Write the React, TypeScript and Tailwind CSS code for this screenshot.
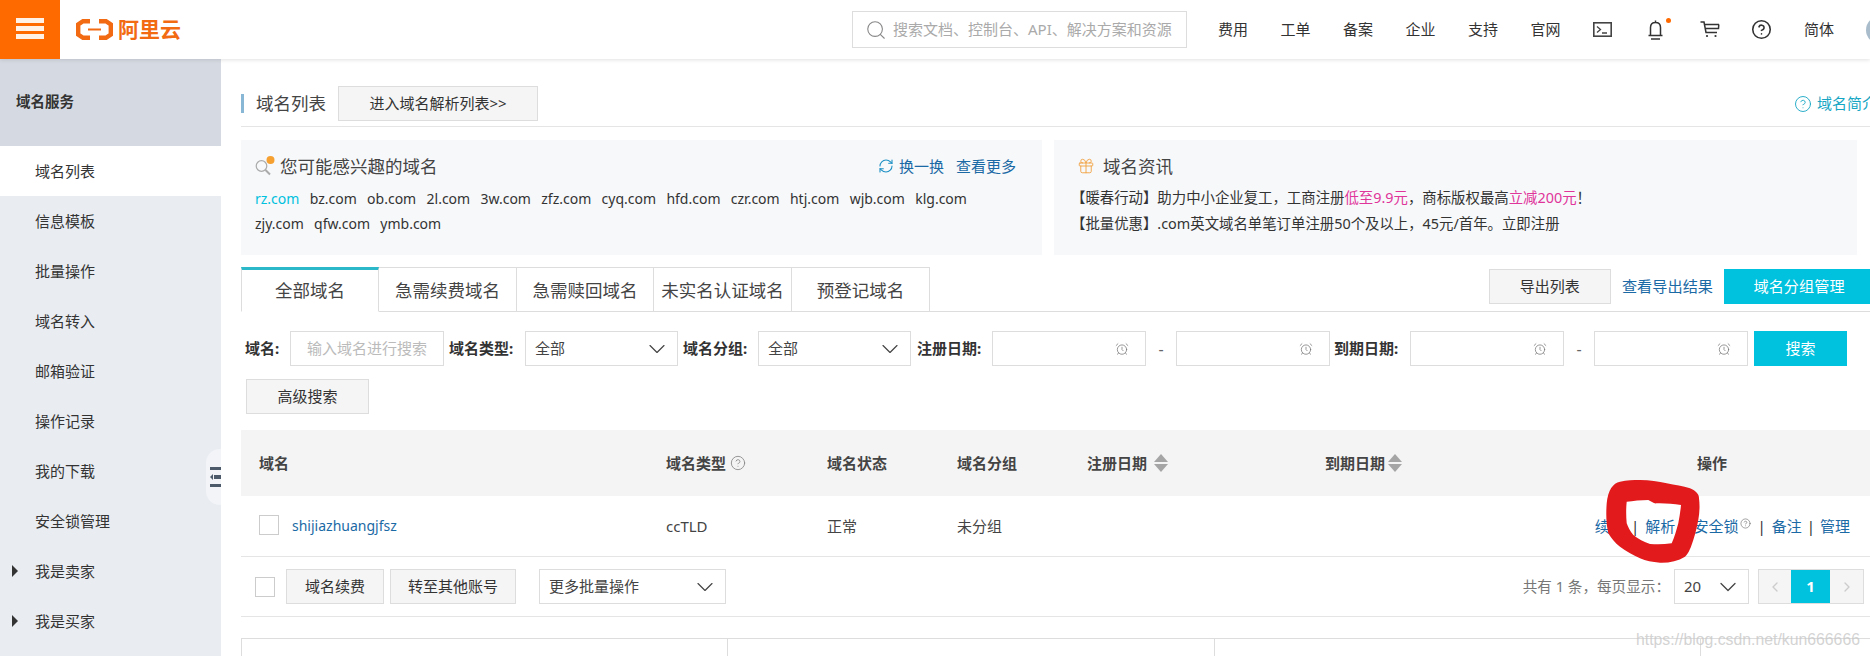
import { ChevronDown, ChevronLeft, ChevronRight, CircleHelp, Search, AlarmClock, Gift, RefreshCw } from "lucide-react";

const font = "font-['Noto_Sans','Noto_Sans_CJK_SC',sans-serif]";

const sideItems = ["信息模板", "批量操作", "域名转入", "邮箱验证", "操作记录", "我的下载", "安全锁管理"];
const domains1 = ["bz.com", "ob.com", "2l.com", "3w.com", "zfz.com", "cyq.com", "hfd.com", "czr.com", "htj.com", "wjb.com", "klg.com"];
const domains2 = ["zjy.com", "qfw.com", "ymb.com"];
const navLeft = ["费用", "工单", "备案", "企业", "支持", "官网"];

const Logo = () => (
  <svg width="37" height="21" viewBox="0 0 37 21" fill="none" stroke="#f26a12" strokeWidth="4.4">
    <path d="M14 2.2H7L2.2 5.5V15.5L7 18.8H14" />
    <path d="M23 2.2H30L34.8 5.5V15.5L30 18.8H23" />
    <path d="M12 10.5H25" strokeWidth="2" />
  </svg>
);

const TerminalIcon = () => (
  <svg width="19" height="15" viewBox="0 0 19 15" fill="none" stroke="#444" strokeWidth="1.6">
    <rect x="0.8" y="0.8" width="17.4" height="13.4" />
    <path d="M4 4.5L7.5 7.5L4 10.5M9 11H14" strokeWidth="1.3" />
  </svg>
);

const BellIcon = () => (
  <svg width="15" height="20" viewBox="0 0 15 20" fill="none" stroke="#333" strokeWidth="1.5">
    <path d="M7.5 0.5V2.5M2.5 15V7.5C2.5 4.5 4.5 2.5 7.5 2.5C10.5 2.5 12.5 4.5 12.5 7.5V15M0.5 15.5H14.5M3 19H12" />
  </svg>
);

const CartIcon = () => (
  <svg width="20" height="17" viewBox="0 0 20 17" fill="none" stroke="#333" strokeWidth="1.5">
    <path d="M0.5 1H4L6 11.5H17M4.8 3.5H19M5.5 7.5H18.5L18.8 3.5" />
    <circle cx="7" cy="15" r="1.1" fill="#333" stroke="none" />
    <circle cx="15.5" cy="15" r="1.1" fill="#333" stroke="none" />
  </svg>
);

const InterestIcon = () => (
  <svg width="21" height="20" viewBox="0 0 21 20" fill="none" className="shrink-0">
    <circle cx="6.5" cy="10" r="5.3" stroke="#aaaaaa" strokeWidth="1.2" />
    <path d="M10.5 14L15 18.5" stroke="#aaaaaa" strokeWidth="2" />
    <circle cx="15.5" cy="4" r="4" fill="#f5a030" />
  </svg>
);

const Field = ({ children, w }: { children?: React.ReactNode; w: string }) => (
  <div className={`h-[35px] ${w} border border-[#dddddd] bg-white flex items-center justify-between text-[15px] text-[#444]`}>
    {children}
  </div>
);

const SelectField = ({ label, w }: { label: string; w: string }) => (
  <Field w={w}>
    <span className="pl-[9px]">{label}</span>
    <ChevronDown className="w-7 h-7 mr-[6px] text-[#444]" strokeWidth={1} />
  </Field>
);

const DateField = () => (
  <Field w="w-[154px]">
    <span />
    <AlarmClock className="w-[14px] h-[14px] mr-[16px] text-[#777]" strokeWidth={1.3} />
  </Field>
);

const GrayButton = ({ children, className }: { children: React.ReactNode; className: string }) => (
  <button className={`h-[35px] bg-[#f5f5f5] border border-[#dddddd] text-[15px] text-[#333] ${className}`}>{children}</button>
);

const Label = ({ children, className }: { children: React.ReactNode; className: string }) => (
  <span className={`text-[15px] font-bold text-[#333] whitespace-nowrap ${className}`}>{children}</span>
);

const Sep = ({ className = "mx-[6px]" }: { className?: string }) => <span className={`${className} text-[#333]`}>|</span>;

function Sort() {
  return (
    <span className="flex flex-col gap-[2px]">
      <span className="w-0 h-0 border-x-[7px] border-x-transparent border-b-[8px] border-b-[#a5a5a5]" />
      <span className="w-0 h-0 border-x-[7px] border-x-transparent border-t-[8px] border-t-[#a5a5a5]" />
    </span>
  );
}

export default function App() {
  return (
    <div className={`${font} relative w-[1870px] h-[656px] overflow-hidden bg-white text-[#333]`}>
      <header className="h-[59px] flex items-center shadow-[0_1px_4px_rgba(0,0,0,0.12)] relative z-10 bg-white overflow-hidden">
        <div className="w-[60px] h-full shrink-0 bg-[#ff6a00] flex flex-col items-center justify-center gap-[3px] pb-[2px]">
          <span className="w-7 h-[5px] bg-[#fff1e6]" />
          <span className="w-7 h-[5px] bg-[#fff1e6]" />
          <span className="w-7 h-[5px] bg-[#fff1e6]" />
        </div>
        <div className="ml-[16px] w-[105px] shrink-0 flex items-center gap-[5px]">
          <Logo />
          <span className="text-[21px] leading-none font-bold text-[#f26a12] whitespace-nowrap">阿里云</span>
        </div>
        <div className="ml-[671px] w-[335px] shrink-0 h-[37px] border border-[#dddddd] flex items-center pl-[12px] gap-[6px]">
          <Search className="w-[22px] h-[22px] text-[#888]" strokeWidth={1.2} />
          <span className="text-[15px] text-[#aaa] whitespace-nowrap">搜索文档、控制台、API、解决方案和资源</span>
        </div>
        <nav className="ml-[31px] flex items-center text-[15px] text-[#333]">
          {navLeft.map((n) => (
            <span key={n} className="w-[62.5px] whitespace-nowrap">{n}</span>
          ))}
          <span className="w-[55px]"><TerminalIcon /></span>
          <span className="w-[52px] relative">
            <BellIcon />
            <span className="absolute left-[18px] -top-[2px] w-[5px] h-[5px] rounded-full bg-[#ff6a00]" />
          </span>
          <span className="w-[52px]"><CartIcon /></span>
          <span className="w-[52px]"><CircleHelp className="w-[21px] h-[21px] -ml-[1px] text-[#333]" strokeWidth={1.8} /></span>
          <span className="w-[62px] whitespace-nowrap">简体</span>
          <span className="w-[28px] h-[28px] shrink-0 rounded-full bg-[#a9bccb]" />
        </nav>
      </header>

      <div className="flex h-[597px]">
        <aside className="relative w-[221px] shrink-0 bg-[#e9edf2] text-[15px]">
          <div className="h-[87px] bg-[#d5dae2] pl-4 flex items-center font-bold text-[14.5px] pb-[2px]">域名服务</div>
          <div className="h-[50px] bg-white pl-[35px] flex items-center">域名列表</div>
          {sideItems.map((s) => (
            <div key={s} className="h-[50px] pl-[35px] flex items-center">{s}</div>
          ))}
          {["我是卖家", "我是买家"].map((s) => (
            <div key={s} className="h-[50px] pl-[35px] flex items-center relative">
              <span className="absolute left-3 w-0 h-0 border-y-[6px] border-y-transparent border-l-[6px] border-l-[#333]" />
              {s}
            </div>
          ))}
          <div className="absolute right-0 top-[390px] w-[15px] h-[56px] bg-[#f2f4f7] rounded-l-[14px] flex flex-col items-end justify-center gap-[4px]">
            <span className="w-[11px] h-[3px] bg-[#4d5a6a]" />
            <span className="flex items-center gap-[1px]">
              <span className="w-0 h-0 border-y-[3px] border-y-transparent border-r-[3px] border-r-[#4d5a6a]" />
              <span className="w-[7px] h-[4px] bg-[#4d5a6a]" />
            </span>
            <span className="w-[11px] h-[3px] bg-[#4d5a6a]" />
          </div>
        </aside>

        <main className="flex-1 pl-[20px] min-w-0">
          <div className="h-[68px] flex items-center border-b border-[#e5e5e5] pt-[27px] pb-[5px] relative">
            <span className="w-[3px] h-[19px] bg-[#88b7d5]" />
            <span className="ml-[12px] text-[17.5px] text-[#444] whitespace-nowrap">域名列表</span>
            <GrayButton className="ml-[12px] w-[200px] text-[14.5px]">进入域名解析列表&gt;&gt;</GrayButton>
            <span className="ml-auto flex items-center gap-[5px] text-[15px] text-[#16a6c4] whitespace-nowrap translate-x-[7px]">
              <CircleHelp className="w-[18px] h-[18px]" strokeWidth={1.2} />
              域名简介
            </span>
          </div>

          <div className="mt-[13px] flex gap-[12px] pr-[13px]">
            <section className="w-[801px] h-[115px] bg-[#f7f8fa] pl-[14px] pt-[11px]">
              <div className="flex items-center gap-[4px] h-[30px] text-[17.5px] text-[#444]">
                <InterestIcon />
                您可能感兴趣的域名
                <span className="ml-auto mr-[26px] flex items-center text-[15px] text-[#1b6aa5]">
                  <RefreshCw className="w-4 h-4 mr-[5px] text-[#1b8fc4]" strokeWidth={1.6} />
                  <span className="mr-[12px]">换一换</span>
                  <span>查看更多</span>
                </span>
              </div>
              <div className="mt-[5px] flex gap-[10.3px] text-[14px] leading-[25px]">
                <span className="text-[#00c1de]">rz.com</span>
                {domains1.map((d) => <span key={d}>{d}</span>)}
              </div>
              <div className="flex gap-[10.3px] text-[14px] leading-[25px]">
                {domains2.map((d) => <span key={d}>{d}</span>)}
              </div>
            </section>
            <section className="flex-1 h-[115px] bg-[#f7f8fa] pl-[23px] pt-[11px]">
              <div className="flex items-center gap-[8px] h-[30px] text-[17.5px] text-[#444]">
                <Gift className="w-[18px] h-[18px] text-[#f0a040]" strokeWidth={1.2} />
                域名资讯
              </div>
              <div className="text-[14.4px] leading-[26px] mt-[4px] -ml-[6px] whitespace-nowrap">
                【暖春行动】助力中小企业复工，工商注册<span className="text-[#e0359a]">低至9.9元</span>，商标版权最高<span className="text-[#e0359a]">立减200元</span>！
              </div>
              <div className="text-[14.4px] leading-[26px] -ml-[6px] whitespace-nowrap">
                【批量优惠】.com英文域名单笔订单注册50个及以上，45元/首年。立即注册
              </div>
            </section>
          </div>

          <div className="mt-[12px] h-[45px] flex border-b border-[#dddddd] items-end">
            {[
              ["全部域名", "w-[138px]"],
              ["急需续费域名", "w-[138px]"],
              ["急需赎回域名", "w-[137px]"],
              ["未实名认证域名", "w-[138px]"],
              ["预登记域名", "w-[138px]"],
            ].map(([t, w], i) => (
              <div
                key={t}
                className={`${w} h-[45px] -mb-px flex items-center justify-center border-r border-[#dddddd] text-[17.5px] text-[#444] whitespace-nowrap ${
                  i === 0 ? "border-l border-t-[3px] border-t-[#2bb8c9] bg-white border-b border-b-white" : "border-t"
                }`}
              >
                {t}
              </div>
            ))}
            <div className="ml-auto flex items-center self-start mt-[2px]">
              <GrayButton className="w-[122px]">导出列表</GrayButton>
              <span className="ml-[11px] text-[15.2px] text-[#1b6aa5] whitespace-nowrap">查看导出结果</span>
              <button className="ml-[11px] w-[146px] h-[35px] pl-[4px] bg-[#00c1de] text-white text-[15.2px]">域名分组管理</button>
            </div>
          </div>

          <div className="mt-[19px] flex items-center pl-[4px] h-[35px]">
            <Label className="w-[45px]">域名:</Label>
            <div className="w-[154px] h-[35px] border border-[#dddddd] flex items-center justify-center text-[15px] text-[#bbb] whitespace-nowrap">输入域名进行搜索</div>
            <Label className="ml-[5px] w-[76px]">域名类型:</Label>
            <SelectField label="全部" w="w-[153px]" />
            <Label className="ml-[5px] w-[75px]">域名分组:</Label>
            <SelectField label="全部" w="w-[153px]" />
            <Label className="ml-[6px] w-[75px]">注册日期:</Label>
            <DateField />
            <span className="w-[30px] text-center text-[#666]">-</span>
            <DateField />
            <Label className="ml-[4px] w-[76px]">到期日期:</Label>
            <DateField />
            <span className="w-[30px] text-center text-[#666]">-</span>
            <DateField />
            <button className="ml-[6px] w-[93px] h-[35px] bg-[#00c1de] text-white text-[15px]">搜索</button>
          </div>
          <GrayButton className="mt-[13px] ml-[5px] w-[123px] block">高级搜索</GrayButton>

          <div className="mt-[16px] h-[66px] bg-[#f4f4f4] flex items-center text-[15px] font-bold text-[#444]">
            <span className="ml-[18px] w-[407px]">域名</span>
            <span className="w-[161px] flex items-center gap-[4px]">域名类型<CircleHelp className="w-[16px] h-[16px] text-[#888]" strokeWidth={1.3} /></span>
            <span className="w-[130px]">域名状态</span>
            <span className="w-[130px]">域名分组</span>
            <span className="w-[238px] flex items-center gap-[7px]">注册日期<Sort /></span>
            <span className="w-[373px] flex items-center gap-[3px]">到期日期<Sort /></span>
            <span className="-ml-[1px]">操作</span>
          </div>
          <div className="h-[61px] border-b border-[#e5e5e5] flex items-center text-[15px] text-[#444]">
            <span className="ml-[18px] -mt-[3px] w-[20px] h-[20px] border border-[#ccc]" />
            <span className="ml-[13px] -mt-[2px] w-[374px] text-[14px] text-[#1b6aa5]">shijiazhuangjfsz</span>
            <span className="w-[161px]">ccTLD</span>
            <span className="w-[130px]">正常</span>
            <span className="w-[130px]">未分组</span>
            <span className="ml-auto mr-[20px] flex items-center text-[15px] text-[#1b6aa5] whitespace-nowrap">
              <span>续费</span>
              <Sep />
              <span>解析</span>
              <Sep className="mx-[5px]" />
              <span>安全锁</span>
              <CircleHelp className="w-[11px] h-[11px] ml-[2px] -mt-[6px] text-[#666]" strokeWidth={1.3} />
              <Sep />
              <span>备注</span>
              <Sep className="mx-[5px]" />
              <span>管理</span>
            </span>
          </div>
          <div className="h-[60px] border-b border-[#e5e5e5] flex items-center">
            <span className="ml-[14px] w-[20px] h-[20px] border border-[#ccc]" />
            <GrayButton className="ml-[11px] w-[98px]">域名续费</GrayButton>
            <GrayButton className="ml-[6px] w-[126px]">转至其他账号</GrayButton>
            <div className="ml-[23px]"><SelectField label="更多批量操作" w="w-[187px]" /></div>
            <span className="ml-auto text-[14.6px] text-[#777] whitespace-nowrap">共有 1 条，每页显示：</span>
            <div className="ml-[4px] w-[75px] h-[35px] border border-[#dddddd] flex items-center justify-between pl-[9px] pr-[6px] text-[15px] text-[#444]">
              20
              <ChevronDown className="w-7 h-7 text-[#444]" strokeWidth={1.1} />
            </div>
            <div className="ml-[9px] mr-[6px] flex h-[35px] border border-[#dddddd] bg-[#f5f5f5]">
              <span className="w-[32px] flex items-center justify-center"><ChevronLeft className="w-4 h-4 text-[#ccc]" /></span>
              <span className="w-[39px] bg-[#00c1de] text-white font-bold flex items-center justify-center text-[15px]">1</span>
              <span className="w-[33px] flex items-center justify-center"><ChevronRight className="w-4 h-4 text-[#ccc]" /></span>
            </div>
          </div>
          <div className="mt-[21px] h-[40px] border-t border-l border-[#dddddd] grid grid-cols-[486px_487px_486px_1fr]">
            <div className="border-r border-[#dddddd]" />
            <div className="border-r border-[#dddddd]" />
            <div className="border-r border-[#dddddd]" />
          </div>
        </main>
      </div>

      <svg className="absolute left-[1605px] top-[478px]" width="98" height="88" viewBox="0 0 98 88">
        <path
          fillRule="evenodd"
          fill="#e21a1c"
          d="M1.7 25.3C3 12 8 5 15 3.7C22 2 28 2 35 2C45 2 53 3.5 61.7 5.3C70 7 78 8 85 10.3C91 13 94 16 94 20.3C95 28 94.5 35 93.3 42C92 49 90.5 55 88.3 62C86 69 84 75 80 78.7C73 83 64 85 55 84.7C47 84 41 83 35 80.3C28 77 21 73 15 68.7C10 65 6 60 3.3 55.3C1 45 1 35 1.7 25.3ZM21.7 23.7C28 23 36 22 43.3 22C46 23 49 26 51.7 25.3C60 25 68 26 76 27C75.5 33 74.5 39 73.3 45.3C71.5 52 69.5 59 66.7 65.3C59 66.5 52 66.5 45 66C39 64 33 61 28.3 57C25 53 23 49 21.7 45.3C21 38 21 30 21.7 23.7Z"
        />
      </svg>
      <span className="absolute left-[1636px] top-[628px] font-['Liberation_Sans',sans-serif] text-[15.8px] text-[#c8c8c8]/80 whitespace-nowrap">https://blog.csdn.net/kun666666</span>
    </div>
  );
}
